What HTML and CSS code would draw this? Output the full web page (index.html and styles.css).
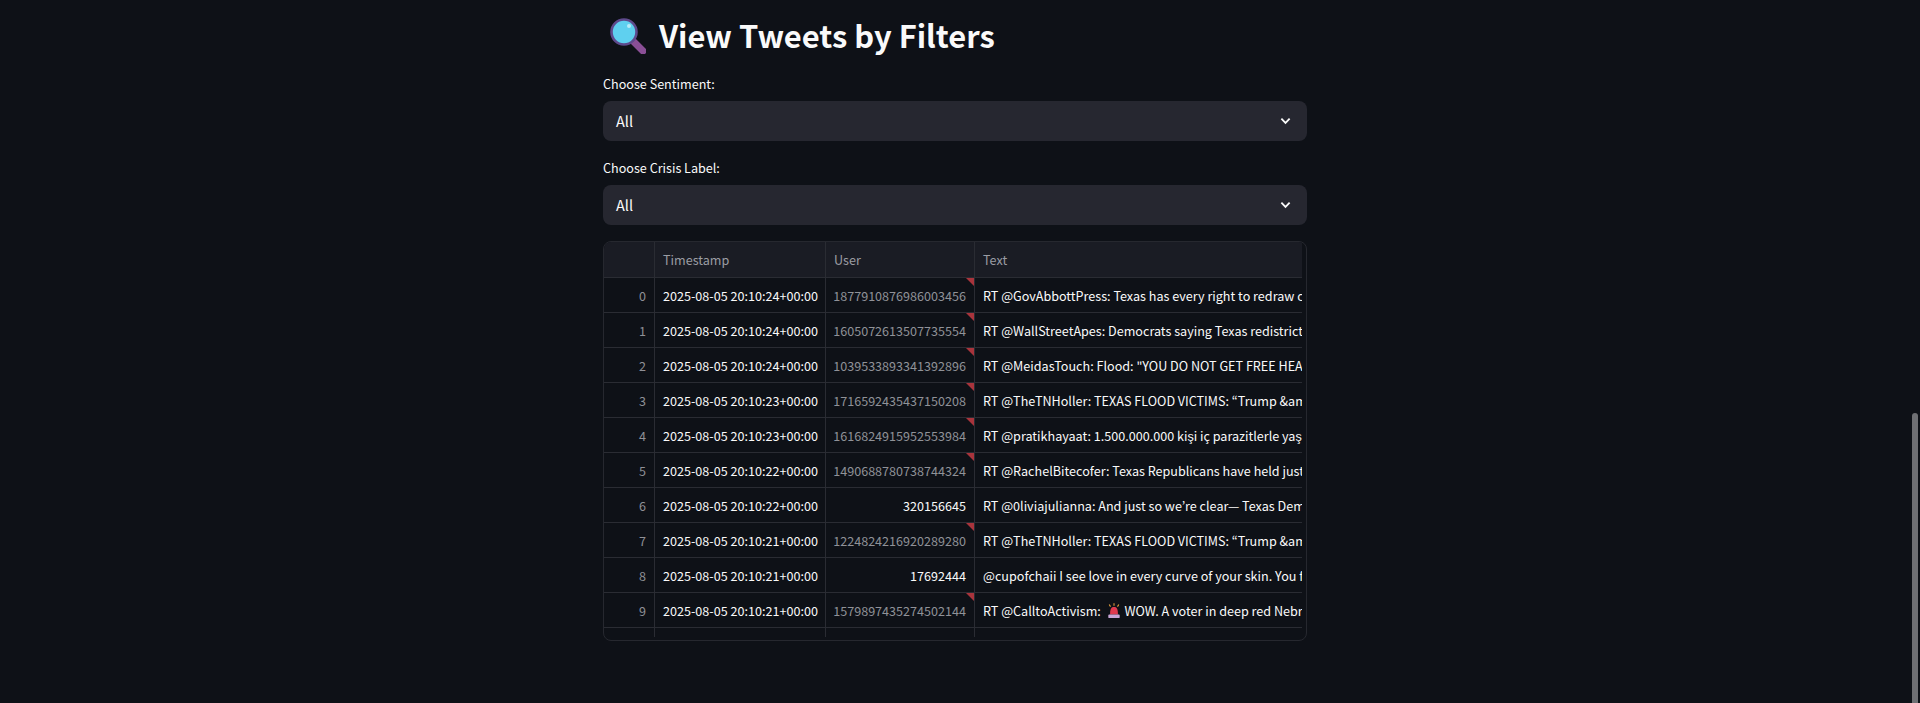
FILE: index.html
```html
<!DOCTYPE html>
<html lang="en">
<head>
    <meta charset="UTF-8">
    <title>View Tweets by Filters</title>
    <link rel="stylesheet" href="styles.css">
</head>
<body>
    <div class="container">
        <h2 class="title">
            <svg class="title-icon" viewBox="0 0 36 36">
                <path d="M22 22 L33 33" stroke="#8a4f96" stroke-width="7" stroke-linecap="round"/>
                <circle cx="14" cy="14" r="12.5" fill="#5fd0ef" stroke="#5e4a8c" stroke-width="2.6"/>
                <circle cx="19" cy="8" r="2" fill="#b9ecf8"/>
            </svg>
            <span>View Tweets by Filters</span>
        </h2>

        <div class="field">
            <label class="field-label">Choose Sentiment:</label>
            <div class="select">
                <span>All</span>
                <svg class="chevron" viewBox="0 0 12 8"><path d="M1.5 1.5 L6 6 L10.5 1.5" fill="none" stroke="#fafafa" stroke-width="2"/></svg>
            </div>
        </div>

        <div class="field">
            <label class="field-label">Choose Crisis Label:</label>
            <div class="select">
                <span>All</span>
                <svg class="chevron" viewBox="0 0 12 8"><path d="M1.5 1.5 L6 6 L10.5 1.5" fill="none" stroke="#fafafa" stroke-width="2"/></svg>
            </div>
        </div>

        <div class="table-wrap">
            <table class="tweets">
                <colgroup>
                    <col class="col-index">
                    <col class="col-time">
                    <col class="col-user">
                    <col class="col-text">
                </colgroup>
                <thead>
                    <tr><th></th><th>Timestamp</th><th>User</th><th class="last">Text</th></tr>
                </thead>
                <tbody>
                    <tr><td class="idx">0</td><td>2025-08-05 20:10:24+00:00</td><td class="user lossy">1877910876986003456</td><td class="last">RT @GovAbbottPress: Texas has every right to redraw districts</td></tr>
                    <tr><td class="idx">1</td><td>2025-08-05 20:10:24+00:00</td><td class="user lossy">1605072613507735554</td><td class="last">RT @WallStreetApes: Democrats saying Texas redistricting</td></tr>
                    <tr><td class="idx">2</td><td>2025-08-05 20:10:24+00:00</td><td class="user lossy">1039533893341392896</td><td class="last">RT @MeidasTouch: Flood: "YOU DO NOT GET FREE HEALTHCARE</td></tr>
                    <tr><td class="idx">3</td><td>2025-08-05 20:10:23+00:00</td><td class="user lossy">1716592435437150208</td><td class="last">RT @TheTNHoller: TEXAS FLOOD VICTIMS: “Trump &amp;amp; Republicans</td></tr>
                    <tr><td class="idx">4</td><td>2025-08-05 20:10:23+00:00</td><td class="user lossy">1616824915952553984</td><td class="last">RT @pratikhayaat: 1.500.000.000 kişi iç parazitlerle yaşıyor</td></tr>
                    <tr><td class="idx">5</td><td>2025-08-05 20:10:22+00:00</td><td class="user lossy">1490688780738744324</td><td class="last">RT @RachelBitecofer: Texas Republicans have held just about</td></tr>
                    <tr><td class="idx">6</td><td>2025-08-05 20:10:22+00:00</td><td class="user">320156645</td><td class="last">RT @0liviajulianna: And just so we’re clear— Texas Democrats</td></tr>
                    <tr><td class="idx">7</td><td>2025-08-05 20:10:21+00:00</td><td class="user lossy">1224824216920289280</td><td class="last">RT @TheTNHoller: TEXAS FLOOD VICTIMS: “Trump &amp;amp; Republicans</td></tr>
                    <tr><td class="idx">8</td><td>2025-08-05 20:10:21+00:00</td><td class="user">17692444</td><td class="last">@cupofchaii I see love in every curve of your skin. You feel</td></tr>
                    <tr><td class="idx">9</td><td>2025-08-05 20:10:21+00:00</td><td class="user lossy">1579897435274502144</td><td class="last">RT @CalltoActivism: <svg class="siren" viewBox="0 0 16 18"><path d="M8 0v3M2.5 1.5l1.5 2.5M13.5 1.5L12 4" stroke="#e8a33d" stroke-width="1.2"/><path d="M3.5 13 C3.500 6 5 4.500 8 4.500 C11 4.500 12.500 6 12.500 13z" fill="#e0394f"/><rect x="1.500" y="13" width="13" height="4" rx="1" fill="#c9a6d8"/></svg> WOW. A voter in deep red Nebraska just</td></tr>
                    <tr class="filler"><td></td><td></td><td></td><td class="last"></td></tr>
                </tbody>
            </table>
        </div>
    </div>

    <div class="scrollbar"></div>
</body>
</html>
```

FILE: styles.css
```css
html, body {
    height: 100%;
}

body {
    font-family: "Noto Sans CJK JP", "Source Sans Pro", sans-serif;
    margin: 0;
    padding: 0 10px 0 0;
    background-color: #0e1117;
    color: #fafafa;
    overflow: hidden;
}

.container {
    width: 704px;
    margin: 0 auto;
}

.title {
    display: flex;
    align-items: center;
    height: 73px;
    margin: 0;
    padding: 0 0 4px 7px;
    box-sizing: border-box;
    font-size: 30.9px;
    font-weight: 600;
}

.title-icon {
    width: 36px;
    height: 36px;
    margin-top: 2px;
    margin-right: 13px;
}

.field {
    margin-bottom: 16px;
}

.field-label {
    display: block;
    height: 28px;
    font-size: 12.6px;
    line-height: 22px;
}

.select {
    display: flex;
    align-items: center;
    justify-content: space-between;
    height: 40px;
    padding: 0 16px 0 13px;
    background-color: #262730;
    border-radius: 8px;
    font-size: 14.5px;
}

.select span {
    margin-top: -2px;
}

.chevron {
    width: 11px;
    height: 8px;
}

.table-wrap {
    height: 400px;
    box-sizing: border-box;
    border: 1px solid #26282f;
    border-radius: 8px;
    overflow: hidden;
}

.tweets {
    width: 698px;
    table-layout: fixed;
    border-collapse: separate;
    border-spacing: 0;
    font-size: 12.6px;
}

.col-index { width: 51px; }
.col-time { width: 171px; }
.col-user { width: 149px; }
.col-text { width: 327px; }

th, td {
    box-sizing: border-box;
    padding: 0 0 0 8px;
    border-right: 1px solid #2a2c33;
    border-bottom: 1px solid #2a2c33;
    white-space: nowrap;
    overflow: hidden;
    text-align: left;
}

th {
    height: 36px;
    background-color: #1a1c24;
    color: #9a9ca3;
    font-weight: 400;
}

td {
    height: 35px;
}

th.last, td.last {
    border-right: none;
}

td.idx {
    padding: 0 8px 0 0;
    text-align: right;
    color: #8f9096;
}

td.user {
    position: relative;
    padding: 0 8px 0 0;
    text-align: right;
}

td.lossy {
    color: #909298;
}

/* little red corner on the ids that lost precision */
td.lossy::after {
    content: "";
    position: absolute;
    top: 0;
    right: 0;
    border-top: 8px solid #a9343c;
    border-left: 8px solid transparent;
}

.filler td {
    height: 9px;
    border-bottom: none;
}

.siren {
    width: 14px;
    height: 16px;
    margin: 0 1px 0 3px;
    vertical-align: -3px;
}

.scrollbar {
    position: fixed;
    top: 413px;
    right: 2px;
    bottom: 0;
    width: 6px;
    background-color: #6f7074;
    border-radius: 3px 3px 0 0;
}
```
